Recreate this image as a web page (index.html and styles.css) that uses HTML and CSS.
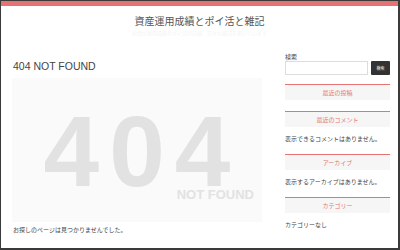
FILE: index.html
```html
<!DOCTYPE html>
<html lang="ja">
<head>
    <meta charset="UTF-8">
    <meta name="viewport" content="width=device-width, initial-scale=1.0">
    <title>404 NOT FOUND | 資産運用成績とポイ活と雑記</title>
    <link rel="stylesheet" href="styles.css">
</head>
<body>
<div id="frame">
    <div class="top-bar"></div>
    <header class="site-header">
        <h1 class="site-title">資産運用成績とポイ活と雑記</h1>
        <p class="site-desc">投資の運用成績やポイ活の記録、日々の雑記を書いています</p>
    </header>
    <div id="wrap">
        <main class="content">
            <h2 class="page-title">404 NOT FOUND</h2>
            <div class="not-found">
                <span class="big">404</span>
                <span class="small">NOT FOUND</span>
            </div>
            <p class="note">お探しのページは見つかりませんでした。</p>
        </main>
        <aside class="sidebar">
            <div class="widget search">
                <label for="s">検索</label>
                <form class="search-form">
                    <input type="text" id="s"/>
                    <button type="button">検索</button>
                </form>
            </div>
            <div class="widget empty">
                <h3 class="widget-title">最近の投稿</h3>
            </div>
            <div class="widget">
                <h3 class="widget-title">最近のコメント</h3>
                <p>表示できるコメントはありません。</p>
            </div>
            <div class="widget">
                <h3 class="widget-title">アーカイブ</h3>
                <p>表示するアーカイブはありません。</p>
            </div>
            <div class="widget">
                <h3 class="widget-title">カテゴリー</h3>
                <p>カテゴリーなし</p>
            </div>
        </aside>
    </div>
</div>
</body>
</html>
```

FILE: styles.css
```css
* {
  box-sizing: border-box;
  margin: 0;
  padding: 0;
}

html, body {
  width: 100%;
  height: 100%;
  background: #fff;
  font-family: "Noto Sans CJK JP", "Noto Sans", sans-serif;
  color: #444;
}

#frame {
  height: 250px;
  border: 1px solid #3a3a3a;
  border-width: 1px 2px 2px 1px;
  overflow: hidden;
}

.top-bar {
  height: 5px;
  background: #e57373;
}

.site-header {
  text-align: center;
  padding-top: 8px;
  height: 47px;
}

.site-title {
  font-size: 10px;
  font-weight: normal;
  color: #555;
  line-height: 14px;
}

.site-desc {
  font-size: 5px;
  color: #f4f4f4;
  line-height: 10px;
}

#wrap {
  display: flex;
  gap: 23px;
  padding-left: 11px;
}

.content {
  flex: none;
  width: 250px;
}

.page-title {
  font-family: "Liberation Sans", Arial, sans-serif;
  font-size: 10.5px;
  font-weight: normal;
  color: #444;
  line-height: 14px;
  margin-top: 6px;
  margin-left: 1px;
}

.not-found {
  margin-top: 5px;
  height: 144px;
  background: #fafafa;
  display: flex;
  flex-direction: column;
  align-items: center;
  padding-top: 37px;
  font-family: "Liberation Sans", Arial, sans-serif;
  font-weight: bold;
  color: #e2e2e2;
}

.not-found .big {
  font-size: 100px;
  line-height: 72px;
  letter-spacing: 10px;
  padding-left: 10px;
}

.not-found .small {
  align-self: flex-end;
  font-size: 13px;
  line-height: 16px;
  margin-right: 8px;
}

.note {
  font-size: 6px;
  line-height: 10px;
  margin-top: 3px;
  margin-left: 1px;
}

.sidebar {
  flex: none;
  width: 105px;
  font-size: 6px;
}

.search label {
  display: block;
  line-height: 7px;
}

.search-form {
  display: flex;
  gap: 3px;
  margin-top: 1px;
}

.search-form input {
  flex: 1;
  width: 0;
  min-width: 0;
  height: 14px;
  border: 1px solid #ddd;
  background: #fff;
}

.search-form button {
  flex: none;
  width: 19px;
  height: 14px;
  border: none;
  border-radius: 1px;
  background: #333;
  color: #fff;
  font-family: inherit;
  font-size: 4px;
}

.widget {
  margin-bottom: 10px;
}

.widget.search {
  margin-bottom: 9px;
}

.widget.empty {
  margin-bottom: 11px;
}

.widget-title {
  border-top: 1px solid #e57373;
  background: #f6f6f6;
  color: #e57373;
  font-size: 6px;
  font-weight: normal;
  text-align: center;
  line-height: 15px;
}

.widget p {
  line-height: 10px;
  margin-top: 7px;
}
```
